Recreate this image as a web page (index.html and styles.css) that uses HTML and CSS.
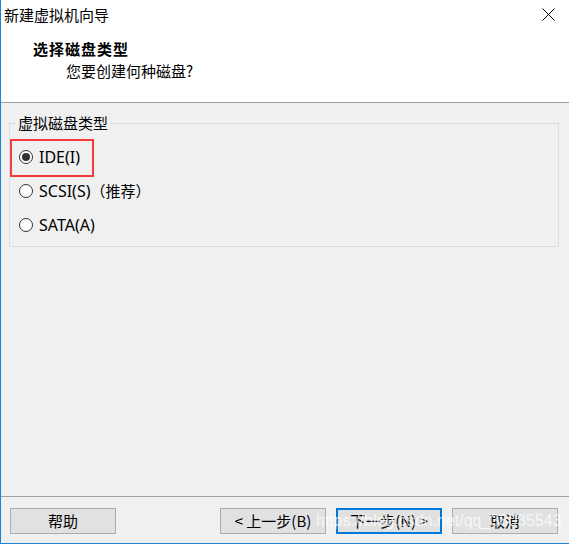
FILE: index.html
```html
<!DOCTYPE html>
<html lang="zh-CN">
<head>
<meta charset="utf-8">
<title>新建虚拟机向导</title>
<link rel="stylesheet" href="styles.css">
</head>
<body>
<div class="window">
  <div class="header">
    <div class="titlebar">
      <span class="title">新建虚拟机向导</span>
      <svg class="close" width="13" height="13" viewBox="0 0 13 13"><path d="M0.5 0.5 L12.5 12.5 M12.5 0.5 L0.5 12.5" stroke="#000" stroke-width="1" fill="none"/></svg>
    </div>
    <div class="heading">选择磁盘类型</div>
    <div class="subheading">您要创建何种磁盘?</div>
  </div>
  <div class="content">
    <div class="group">
      <span class="legend">虚拟磁盘类型</span>
      <div class="row"><span class="radio checked"></span><span class="label">IDE(I)</span></div>
      <div class="row"><span class="radio"></span><span class="label">SCSI(S)</span><span class="note">（推荐）</span></div>
      <div class="row"><span class="radio"></span><span class="label">SATA(A)</span></div>
      <div class="highlight"></div>
    </div>
  </div>
  <div class="footer">
    <button class="btn">帮助</button>
    <div class="btn-group">
      <button class="btn">&lt; 上一步(B)</button>
      <button class="btn primary">下一步(N) &gt;</button>
      <button class="btn">取消</button>
    </div>
    <span class="watermark">https://blog.csdn.net/qq_38035543</span>
  </div>
</div>
</body>
</html>
```
FILE: styles.css
```css
* { box-sizing: border-box; }
html, body { margin: 0; padding: 0; }
body {
  background: #ffffff;
  font-family: "Noto Sans", "Noto Sans CJK SC", sans-serif;
  font-size: 15px;
  color: #000;
}
.window {
  width: 569px;
  height: 544px;
  border-left: 1px solid #1883d7;
  border-bottom: 1px solid #1883d7;
  background: #f0f0f0;
  display: flex;
  flex-direction: column;
}
.header {
  background: #ffffff;
  height: 103px;
  border-bottom: 1px solid #a0a0a0;
  position: relative;
}
.titlebar {
  height: 30px;
  line-height: 30px;
  padding-left: 3px;
  position: relative;
}
.title { font-family: "Noto Sans CJK SC", sans-serif; font-size: 15px; }
.close { position: absolute; left: 541px; top: 8px; }
.heading {
  font-family: "Noto Sans CJK SC", sans-serif;
  font-weight: bold;
  font-size: 15px;
  letter-spacing: 1px;
  line-height: 20px;
  margin-top: 9px;
  padding-left: 32px;
}
.subheading {
  font-family: "Noto Sans CJK SC", sans-serif;
  font-size: 15px;
  line-height: 20px;
  margin-top: 2px;
  padding-left: 65px;
}
.content {
  flex: 1;
  padding: 20px 0 0 8px;
}
.group {
  position: relative;
  width: 550px;
  height: 124px;
  border: 1px solid #dcdcdc;
  padding-top: 16px;
}
.legend {
  position: absolute;
  left: 6px;
  top: -10px;
  padding: 0 2px;
  line-height: 18px;
  background: #f0f0f0;
  font-family: "Noto Sans CJK SC", sans-serif;
}
.row {
  height: 34px;
  display: flex;
  align-items: center;
  padding-left: 9px;
}
.radio {
  width: 14px;
  height: 14px;
  border: 1px solid #333;
  border-radius: 50%;
  background: #fff;
  position: relative;
  flex: none;
}
.radio.checked::after {
  content: "";
  position: absolute;
  left: 2px; top: 2px;
  width: 8px; height: 8px;
  border-radius: 50%;
  background: #333;
}
.label {
  margin-left: 6px;
  font-size: 16px;
  line-height: 20px;
}
.note {
  font-family: "Noto Sans CJK SC", sans-serif;
  font-size: 15px;
  margin-left: 0px;
  line-height: 20px;
}
.highlight {
  position: absolute;
  left: 0px;
  top: 15px;
  width: 84px;
  height: 38px;
  border: 2px solid #f23c3c;
}
.footer {
  position: relative;
  height: 47px;
  border-top: 1px solid #a0a0a0;
  display: flex;
  justify-content: space-between;
  align-items: flex-start;
  padding: 11px 11px 0 9px;
}
.btn-group { display: flex; gap: 10px; }
.btn {
  width: 106px;
  height: 26px;
  border: 1px solid #adadad;
  background: #e1e1e1;
  font-family: "Noto Sans CJK SC", sans-serif;
  font-size: 15px;
  color: #000;
  padding: 0;
  line-height: 22px;
}
.btn.primary { border: 2px solid #0078d7; }
.watermark {
  position: absolute;
  left: 315px;
  top: 14px;
  font-family: "Liberation Sans", Arial, sans-serif;
  font-size: 16px;
  line-height: 20px;
  color: rgba(255,255,255,0.75);
  pointer-events: none;
}
```
